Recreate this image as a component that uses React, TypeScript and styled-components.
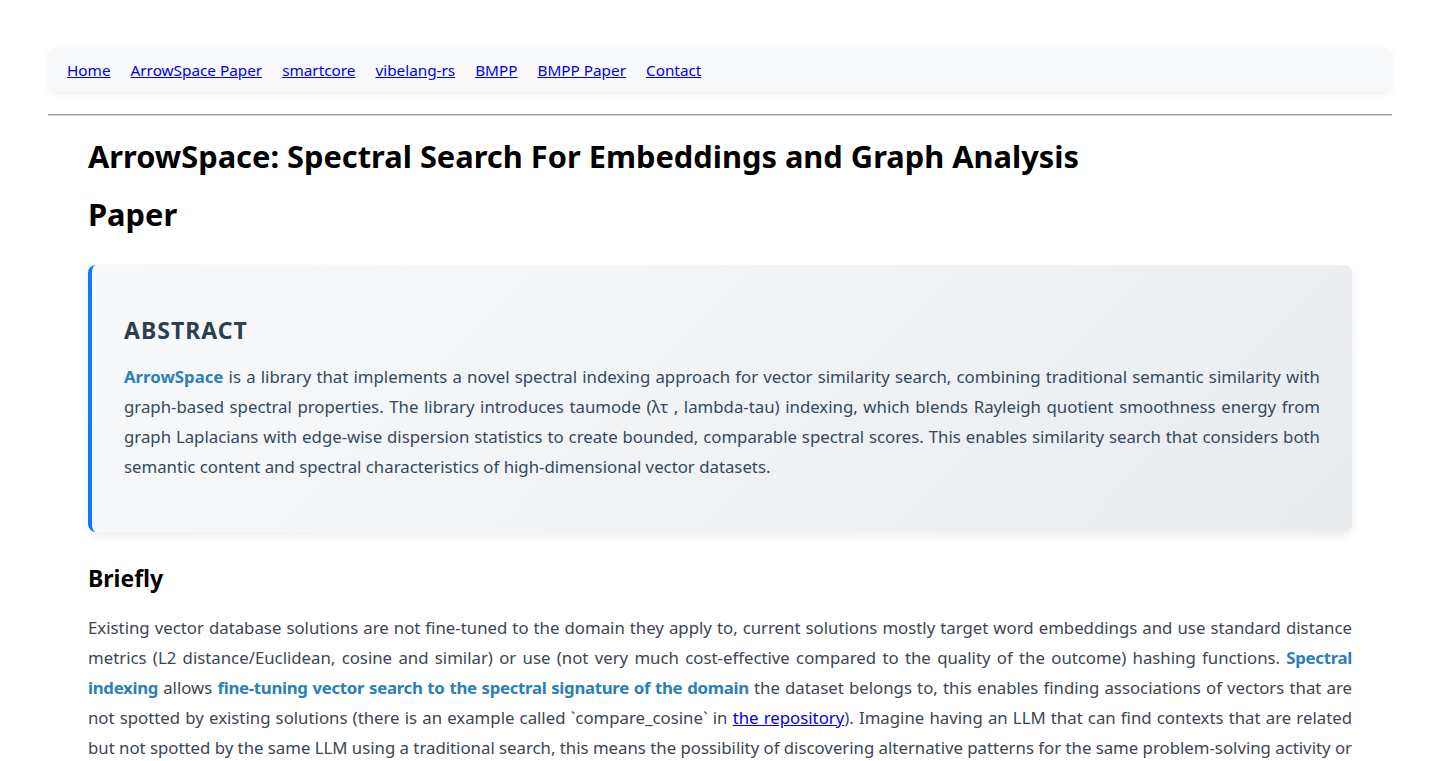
import styled, { createGlobalStyle } from "styled-components";

const GlobalStyle = createGlobalStyle`
  body {
    margin: 0;
    background: #ffffff;
    font-family: "Noto Sans", "Open Sans", sans-serif;
  }
`;

const Page = styled.div`
  padding: 48px 48px 0;
`;

const Nav = styled.nav`
  display: flex;
  align-items: center;
  gap: 20px;
  height: 44px;
  padding: 0 19px;
  background: #f8f9fb;
  border-radius: 8px;
  box-shadow: 0 2px 6px rgba(0, 0, 0, 0.06);
`;

const NavLink = styled.a`
  font-size: 15.3px;
  color: #0000ee;
  text-decoration: underline;
`;

const Rule = styled.hr`
  margin: 22px 0 0;
  border: none;
  border-top: 1px solid #999;
  border-bottom: 1px solid #ddd;
`;

const Content = styled.main`
  padding: 0 40px;
`;

const Title = styled.h1`
  margin: 11px 0 0;
  font-size: 30.8px;
  line-height: 58px;
  font-weight: 700;
  color: #000;
`;

const Abstract = styled.section`
  margin-top: 22px;
  padding: 50px 32px 50px 32px;
  border-left: 4px solid #0a7bff;
  border-radius: 8px;
  background: linear-gradient(135deg, #f8f9fa 0%, #e9ecef 100%);
  box-shadow: 0 4px 10px rgba(0, 0, 0, 0.07);
`;

const AbstractHead = styled.h2`
  margin: 0 0 17px;
  font-size: 23px;
  line-height: 30px;
  letter-spacing: 1px;
  text-transform: uppercase;
  color: #2c3e50;
`;

const Para = styled.p<{ $tone?: string; $tight?: boolean }>`
  margin: 0;
  font-size: 16.8px;
  line-height: 30px;
  text-align: justify;
  word-spacing: ${(p) => (p.$tight ? "-0.25px" : "0")};
  color: ${(p) => p.$tone || "#3d4652"};
`;

const Mark = styled.strong<{ $tight?: boolean }>`
  color: #2a80b9;
  font-weight: 700;
  letter-spacing: ${(p) => (p.$tight ? "-0.3px" : "0")};
`;

const SectionHead = styled.h2`
  margin: 28px 0 17px;
  font-size: 23px;
  line-height: 36px;
  color: #000;
`;

const InlineLink = styled.a`
  color: #0000ee;
  text-decoration: underline;
`;

const links = ["Home", "ArrowSpace Paper", "smartcore", "vibelang-rs", "BMPP", "BMPP Paper", "Contact"];

export default function App() {
  return (
    <>
      <GlobalStyle />
      <Page>
        <Nav>
          {links.map((l) => (
            <NavLink key={l} href="#">
              {l}
            </NavLink>
          ))}
        </Nav>
        <Rule />
        <Content>
          <Title>
            ArrowSpace: Spectral Search For Embeddings and Graph Analysis
            <br />
            Paper
          </Title>
          <Abstract>
            <AbstractHead>Abstract</AbstractHead>
            <Para $tone="#34495e">
              <Mark>ArrowSpace</Mark> is a library that implements a novel spectral indexing approach for vector
              similarity search, combining traditional semantic similarity with graph-based spectral properties. The
              library introduces taumode (λτ , lambda-tau) indexing, which blends Rayleigh quotient smoothness energy
              from graph Laplacians with edge-wise dispersion statistics to create bounded, comparable spectral scores.
              This enables similarity search that considers both semantic content and spectral characteristics of
              high-dimensional vector datasets.
            </Para>
          </Abstract>
          <SectionHead>Briefly</SectionHead>
          <Para $tight>
            Existing vector database solutions are not fine-tuned to the domain they apply to, current solutions mostly
            target word embeddings and use standard distance metrics (L2 distance/Euclidean, cosine and similar) or use
            (not very much cost-effective compared to the quality of the outcome) hashing functions.{" "}
            <Mark $tight>Spectral indexing</Mark> allows{" "}
            <Mark $tight>fine-tuning vector search to the spectral signature of the domain</Mark> the dataset belongs
            to, this enables finding associations of vectors that are not spotted by existing solutions (there is an
            example called `compare_cosine` in <InlineLink href="#">the repository</InlineLink>). Imagine having an LLM
            that can find contexts that are related but not spotted by the same LLM using a traditional search, this
            means the possibility of discovering alternative patterns for the same problem-solving activity or
            something else.
          </Para>
        </Content>
      </Page>
    </>
  );
}
